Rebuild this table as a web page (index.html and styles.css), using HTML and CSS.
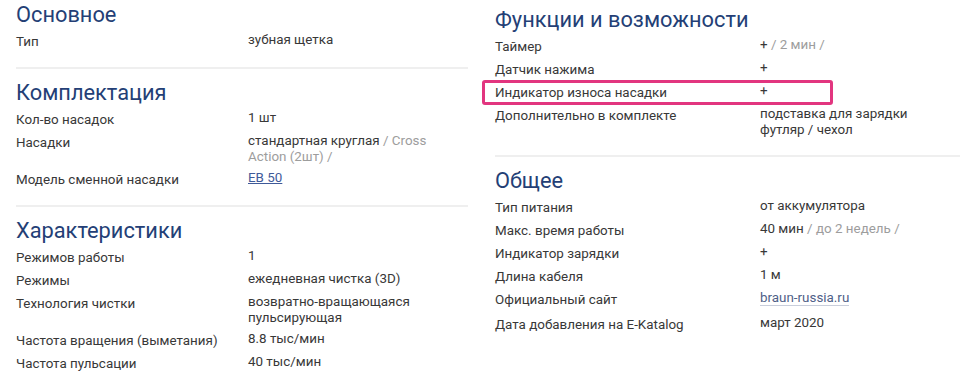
FILE: index.html
```html
<!DOCTYPE html>
<html lang="ru">
<head>
<meta charset="utf-8">
<title>Характеристики</title>
<link rel="stylesheet" href="styles.css">
</head>
<body>
<div class="page">
  <div class="col col--left">
    <section class="section">
      <h2 class="section__title">Основное</h2>
      <div class="row"><div class="row__label">Тип</div><div class="row__value">зубная щетка</div></div>
    </section>
    <hr class="sep">
    <section class="section">
      <h2 class="section__title">Комплектация</h2>
      <div class="row"><div class="row__label">Кол-во насадок</div><div class="row__value">1 шт</div></div>
      <div class="row"><div class="row__label">Насадки</div><div class="row__value">стандартная круглая <span class="muted">/ Cross</span><br><span class="muted">Action (2шт) /</span></div></div>
      <div class="row"><div class="row__label">Модель сменной насадки</div><div class="row__value"><a class="link" href="#">EB 50</a></div></div>
    </section>
    <hr class="sep">
    <section class="section">
      <h2 class="section__title">Характеристики</h2>
      <div class="row"><div class="row__label">Режимов работы</div><div class="row__value">1</div></div>
      <div class="row"><div class="row__label">Режимы</div><div class="row__value">ежедневная чистка (3D)</div></div>
      <div class="row"><div class="row__label">Технология чистки</div><div class="row__value">возвратно-вращающаяся пульсирующая</div></div>
      <div class="row"><div class="row__label">Частота вращения (выметания)</div><div class="row__value">8.8 тыс/мин</div></div>
      <div class="row"><div class="row__label">Частота пульсации</div><div class="row__value">40 тыс/мин</div></div>
    </section>
  </div>
  <div class="col col--right">
    <section class="section">
      <h2 class="section__title">Функции и возможности</h2>
      <div class="row"><div class="row__label">Таймер</div><div class="row__value">+ <span class="muted">/ 2 мин /</span></div></div>
      <div class="row"><div class="row__label">Датчик нажима</div><div class="row__value">+</div></div>
      <div class="row row--marked"><div class="row__label">Индикатор износа насадки</div><div class="row__value">+</div><span class="highlight"></span></div>
      <div class="row"><div class="row__label">Дополнительно в комплекте</div><div class="row__value">подставка для зарядки<br>футляр / чехол</div></div>
    </section>
    <hr class="sep">
    <section class="section">
      <h2 class="section__title">Общее</h2>
      <div class="row"><div class="row__label">Тип питания</div><div class="row__value">от аккумулятора</div></div>
      <div class="row"><div class="row__label">Макс. время работы</div><div class="row__value">40 мин <span class="muted">/ до 2 недель /</span></div></div>
      <div class="row"><div class="row__label">Индикатор зарядки</div><div class="row__value">+</div></div>
      <div class="row"><div class="row__label">Длина кабеля</div><div class="row__value">1 м</div></div>
      <div class="row row--link"><div class="row__label">Официальный сайт</div><div class="row__value"><a class="site" href="#">braun-russia.ru</a></div></div>
      <div class="row"><div class="row__label">Дата добавления на E-Katalog</div><div class="row__value">март 2020</div></div>
    </section>
  </div>
</div>
</body>
</html>
```
FILE: styles.css
```css
* { box-sizing: border-box; }
html, body { margin: 0; padding: 0; background: #fff; }
body {
  font-family: Roboto, "Noto Sans", Arial, sans-serif;
  color: #333;
  width: 960px;
  height: 390px;
  overflow: hidden;
}
.page {
  display: grid;
  grid-template-columns: 452px 1fr;
  column-gap: 27px;
  padding-left: 16px;
}
.col--left { padding-top: 2px; }
.col--right { padding-top: 7px; }

.section__title {
  margin: 0 0 2px;
  font-size: 21.8px;
  line-height: 26px;
  font-weight: 400;
  color: #243f76;
}
.row {
  display: grid;
  position: relative;
}
.col--left .row { grid-template-columns: 232px 1fr; }
.col--right .row { grid-template-columns: 265px 1fr; }

.row__label {
  font-size: 13.4px;
  line-height: 23px;
  color: #383838;
}
.row__value {
  font-size: 13.4px;
  line-height: 16px;
  padding: 2px 0 3px;
  color: #383838;
  max-width: 200px;
}
.col--right .row__value { max-width: 180px; }
.row--link { padding-bottom: 2px; }
.muted { color: #9d9d9d; }
.link { color: #3f5a99; text-decoration: underline; }
.site {
  color: #4f5f88;
  text-decoration: none;
  border-bottom: 1px solid #c9cedb;
}
.sep {
  margin: 14px 0 11px;
  border: 0;
  height: 2px;
  background: #efefef;
}
.highlight {
  position: absolute;
  left: -13px;
  top: -1px;
  width: 351px;
  height: 25px;
  border: 3px solid #e2357f;
  border-radius: 3px;
}
```
